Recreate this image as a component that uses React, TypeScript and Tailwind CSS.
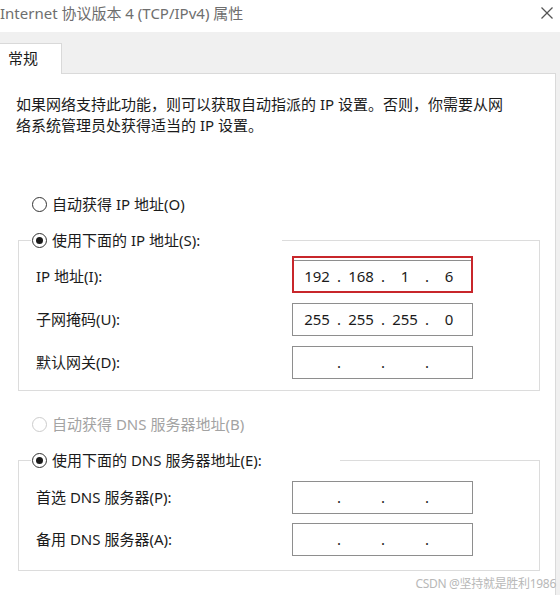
import React from 'react';

type RadioProps = { checked?: boolean; disabled?: boolean; label: string };

function Radio({ checked, disabled, label }: RadioProps) {
    return (
        <div className="flex items-center h-[22px] gap-[5px]">
            <span
                className={`w-[15px] h-[15px] rounded-full border bg-white flex items-center justify-center ${
                    disabled ? 'border-[#cccccc]' : 'border-[#333333]'
                }`}
            >
                {checked && <span className="w-[7px] h-[7px] rounded-full bg-[#1a1a1a]"></span>}
            </span>
            <span className={`text-[15px] leading-[22px] whitespace-nowrap ${disabled ? 'text-[#a3a3a3]' : 'text-[#1b1b1b]'}`}>
                {label}
            </span>
        </div>
    );
}

function IpBox({ parts, highlight }: { parts: string[]; highlight?: boolean }) {
    return (
        <div className="relative w-[181px] h-[33px] border border-[#8e8e8e] bg-white flex items-center pl-[6px] text-[15px] text-[#1b1b1b]">
            {parts.map((p, i) => (
                <React.Fragment key={i}>
                    <span className="w-[36px] text-center">{p}</span>
                    {i < 3 && <span className="w-[8px] text-center">.</span>}
                </React.Fragment>
            ))}
            {/* annotation rectangle */}
            {highlight && <div className="absolute -left-px -right-px -top-[5px] -bottom-px border-2 border-[#c8262b]"></div>}
        </div>
    );
}

function Row({ label, children }: { label: string; children: React.ReactNode }) {
    return (
        <div className="flex items-center h-[33px]">
            <span className="w-[273px] shrink-0 pl-[17px] text-[15px] text-[#1b1b1b] whitespace-nowrap">{label}</span>
            {children}
        </div>
    );
}

export default function App() {
    return (
        <div className="relative w-[560px] h-[595px] overflow-hidden bg-white font-['Noto_Sans','Noto_Sans_CJK_SC',sans-serif]">
            {/* Title bar */}
            <div className="h-[32px] w-full flex items-start pt-[5px] pr-[7px]">
                <span className="flex-1 text-[15px] leading-[17px] text-[#6e6e6e] whitespace-nowrap">Internet 协议版本 4 (TCP/IPv4) 属性</span>
                <span className="mt-[2px] shrink-0 block w-[12px] h-[12px] text-[#555555]">
                    <svg width="12" height="12" viewBox="0 0 12 12" fill="none" stroke="currentColor" strokeWidth="1.2">
                        <line x1="0.5" y1="0.5" x2="11.5" y2="11.5" />
                        <line x1="11.5" y1="0.5" x2="0.5" y2="11.5" />
                    </svg>
                </span>
            </div>

            {/* Tab strip */}
            <div className="h-[41px] bg-[#f0f0f0] flex items-end">
                <div className="relative z-10 -mb-px w-[62px] h-[31px] bg-white border-t border-r border-[#d9d9d9] pl-[8px] pt-[4px] text-[15px] leading-[21px] text-[#1b1b1b]">
                    常规
                </div>
            </div>

            {/* Body */}
            <div className="flex h-[522px]">
                <div className="w-[556px] bg-white border-t border-r border-[#dadada]">
                    <p className="pl-[16px] pt-[20px] text-[15px] leading-[21px] text-[#1b1b1b] whitespace-nowrap">
                        如果网络支持此功能，则可以获取自动指派的 IP 设置。否则，你需要从网
                        <br />
                        络系统管理员处获得适当的 IP 设置。
                    </p>

                    <div className="mt-[57px] ml-[32px]">
                        <Radio label="自动获得 IP 地址(O)" />
                    </div>

                    {/* IP group */}
                    <div className="mt-[25px] ml-[18px] w-[522px] border border-[#dcdcdc] pb-[11px]">
                        <div className="-mt-[12px] ml-[12px] w-[251px] bg-white pl-[1px]">
                            <Radio checked label="使用下面的 IP 地址(S):" />
                        </div>
                        <div className="mt-[9px] flex flex-col gap-[10px]">
                            <Row label="IP 地址(I):">
                                <IpBox parts={['192', '168', '1', '6']} highlight />
                            </Row>
                            <Row label="子网掩码(U):">
                                <IpBox parts={['255', '255', '255', '0']} />
                            </Row>
                            <Row label="默认网关(D):">
                                <IpBox parts={['', '', '', '']} />
                            </Row>
                        </div>
                    </div>

                    <div className="mt-[22px] ml-[32px]">
                        <Radio disabled label="自动获得 DNS 服务器地址(B)" />
                    </div>

                    {/* DNS group */}
                    <div className="mt-[25px] ml-[18px] w-[522px] border border-[#dcdcdc] pb-[14px]">
                        <div className="-mt-[12px] ml-[12px] w-[309px] bg-white pl-[1px]">
                            <Radio checked label="使用下面的 DNS 服务器地址(E):" />
                        </div>
                        <div className="mt-[10px] flex flex-col gap-[9px]">
                            <Row label="首选 DNS 服务器(P):">
                                <IpBox parts={['', '', '', '']} />
                            </Row>
                            <Row label="备用 DNS 服务器(A):">
                                <IpBox parts={['', '', '', '']} />
                            </Row>
                        </div>
                    </div>
                </div>
                <div className="flex-1 bg-[#f0f0f0]"></div>
            </div>

            {/* watermark */}
            <div className="absolute right-[4px] bottom-[4px] text-[12px] leading-[15px] tracking-tight text-[#b8b8b8] whitespace-nowrap">
                CSDN @坚持就是胜利1986
            </div>
        </div>
    );
}
